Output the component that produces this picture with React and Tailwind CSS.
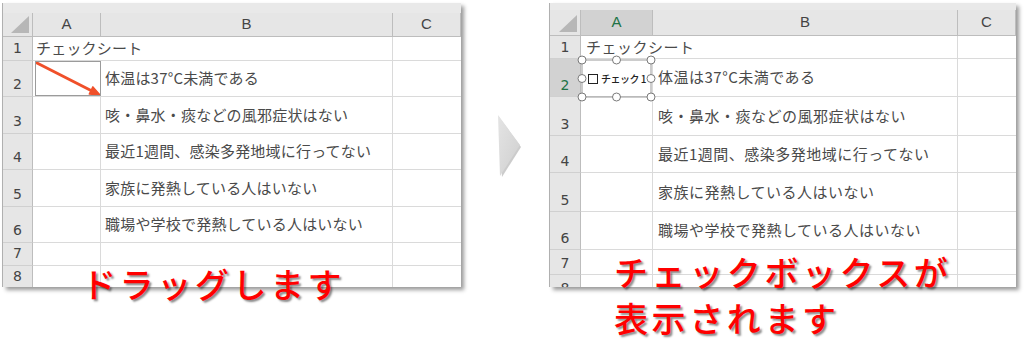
const ROWS = [
  { n: '1', a: 'チェックシート' },
  { n: '2', b: '体温は37°C未満である' },
  { n: '3', b: '咳・鼻水・痰などの風邪症状はない' },
  { n: '4', b: '最近1週間、感染多発地域に行ってない' },
  { n: '5', b: '家族に発熱している人はいない' },
  { n: '6', b: '職場や学校で発熱している人はいない' },
  { n: '7' },
  { n: '8' },
];

const LEFT = {
  frame: 'ml-[3px] mt-[3px] w-[458px] h-[284px]',
  band: 'h-[10px]',
  grid: 'grid-cols-[30px_68px_292px_68px]',
  hdr: 'h-[24px]',
  rowH: ['h-[24px]', 'h-[36px]', 'h-[37px]', 'h-[36px]', 'h-[37px]', 'h-[36px]', 'h-[23px]', 'h-[23px]'],
  text: 'text-[15px] tracking-[0.2px]',
  padA: 'pl-[3px]',
  padB: 'pl-[4px]',
  numPad: 'pb-[4px]',
};

const RIGHT = {
  frame: 'ml-[30px] mt-[3px] w-[466px] h-[284px]',
  band: 'h-[7px]',
  grid: 'grid-cols-[31px_72px_305px_58px]',
  hdr: 'h-[26px]',
  rowH: ['h-[23px]', 'h-[38px]', 'h-[39px]', 'h-[37px]', 'h-[39px]', 'h-[38px]', 'h-[25px]', 'h-[25px]'],
  text: 'text-[15px] tracking-[0.5px]',
  padA: 'pl-[5px]',
  padB: 'pl-[5px]',
  numPad: 'pb-[3px]',
  selected: true,
};

function Corner({ h }) {
  return (
    <div className={`${h} bg-[#e6e6e6] border-r border-b border-[#bdbdbd] flex items-end justify-end pr-[3px] pb-[3px]`}>
      <svg width="18" height="17" viewBox="0 0 18 17">
        <polygon points="18,0 18,17 0,17" fill="#b7b7b7" />
      </svg>
    </div>
  );
}

function Sheet({ cfg, children }) {
  const sel = cfg.selected;
  return (
    <div className={`${cfg.frame} relative shrink-0 bg-white overflow-hidden shadow-[-1px_0_0_#b0b0b0,3px_3px_4px_rgba(0,0,0,0.4)]`}>
      <div className={`${cfg.band} bg-[#e9e9e9]`} />
      <div className={`grid ${cfg.grid} font-['Noto_Sans_CJK_JP',sans-serif] text-[#4a4a4a] ${cfg.text}`}>
        <Corner h={cfg.hdr} />
        {['A', 'B', 'C'].map((c) => (
          <div
            key={c}
            className={`${cfg.hdr} border-r border-b border-[#bdbdbd] flex items-center justify-center font-['Liberation_Sans',sans-serif] text-[15px] tracking-normal ${
              sel && c === 'A' ? 'bg-[#d2d2d2] text-[#217346]' : 'bg-[#e6e6e6] text-[#444]'
            }`}
          >
            {c}
          </div>
        ))}
        {ROWS.map((r, i) => {
          const h = cfg.rowH[i];
          const hot = sel && r.n === '2';
          return [
            <div
              key={r.n + 'n'}
              className={`${h} border-r border-[#bdbdbd] border-b border-b-[#d0d0d0] flex items-end justify-center ${cfg.numPad} font-['DejaVu_Sans',sans-serif] text-[14px] leading-[16px] tracking-normal ${
                hot ? 'bg-[#d2d2d2] text-[#217346]' : 'bg-[#e6e6e6] text-[#444]'
              }`}
            >
              {r.n}
            </div>,
            <div
              key={r.n + 'a'}
              className={`${h} ${r.a ? '' : 'border-r'} border-b border-[#dadada] flex items-center whitespace-nowrap ${cfg.padA}`}
            >
              {r.a}
            </div>,
            <div key={r.n + 'b'} className={`${h} border-r border-b border-[#dadada] flex items-center whitespace-nowrap ${cfg.padB}`}>
              {r.b}
            </div>,
            <div key={r.n + 'c'} className={`${h} border-b border-[#dadada]`} />,
          ];
        })}
      </div>
      {children}
    </div>
  );
}

function DragArrow() {
  return (
    <svg className="absolute left-0 top-0 pointer-events-none" width="120" height="110" viewBox="0 0 120 110">
      <line x1="34" y1="60" x2="88" y2="87.5" stroke="#f0502a" strokeWidth="3" strokeLinecap="round" />
      <polygon points="97,92 86.3,91.1 89.9,83.9" fill="#f0502a" stroke="#f0502a" strokeWidth="1.5" strokeLinejoin="round" />
    </svg>
  );
}

function CheckControl() {
  const pts = [
    [0, 0], [34.5, 0], [69, 0],
    [0, 18.5], [69, 18.5],
    [0, 37], [34.5, 37], [69, 37],
  ];
  return (
    <div className="absolute left-[32px] top-[57px] w-[69px] h-[37px]">
      <div className="absolute inset-0 flex items-center pl-[6px] overflow-hidden">
        <div className="w-[10px] h-[10px] border border-[#222] bg-white shrink-0" />
        <span className="ml-[3px] whitespace-nowrap font-['Noto_Sans_CJK_JP',sans-serif] text-[10px] font-medium text-[#222] tracking-[-0.5px]">
          チェック 1
        </span>
      </div>
      <svg className="absolute -left-[5px] -top-[5px] overflow-visible" width="79" height="47" viewBox="-5 -5 79 47">
        <rect x="0" y="0" width="69" height="37" fill="none" stroke="#9a9a9a" strokeWidth="1" />
        {pts.map(([x, y], i) => (
          <circle key={i} cx={x} cy={y} r="4" fill="#fff" stroke="#7a7a7a" strokeWidth="1" />
        ))}
      </svg>
    </div>
  );
}

function Chevron() {
  return (
    <svg className="ml-[37px] mt-[115px] shrink-0 overflow-visible" width="22" height="61" viewBox="0 0 22 61">
      <defs>
        <linearGradient id="chev" x1="0" y1="0" x2="1" y2="1">
          <stop offset="0" stopColor="#e4e4e4" />
          <stop offset="1" stopColor="#cfcfcf" />
        </linearGradient>
      </defs>
      <polygon points="1,2 23,32 4,62" fill="#9a9a9a" opacity="0.5" />
      <polygon points="0,0 22,30 2,61" fill="url(#chev)" />
    </svg>
  );
}

const redText =
  "absolute font-['Noto_Sans_CJK_JP',sans-serif] font-medium text-[34px] leading-[46px] tracking-[3.6px] text-[#ff0000] whitespace-nowrap [text-shadow:2px_2px_2px_rgba(0,0,0,0.45)]";

export default function App() {
  return (
    <div className="relative w-[1024px] h-[352px] bg-white overflow-hidden flex items-start">
      <Sheet cfg={LEFT}>
        <DragArrow />
        <div className="absolute left-[32px] top-[58px] w-[66px] h-[35px] border border-[#9b9b9b]" />
      </Sheet>
      <Chevron />
      <Sheet cfg={RIGHT}>
        <CheckControl />
      </Sheet>
      <p className={`${redText} left-[82px] top-[261px]`}>ドラッグします</p>
      <p className={`${redText} left-[614px] top-[249px]`}>
        チェックボックスが
        <br />
        表示されます
      </p>
    </div>
  );
}
